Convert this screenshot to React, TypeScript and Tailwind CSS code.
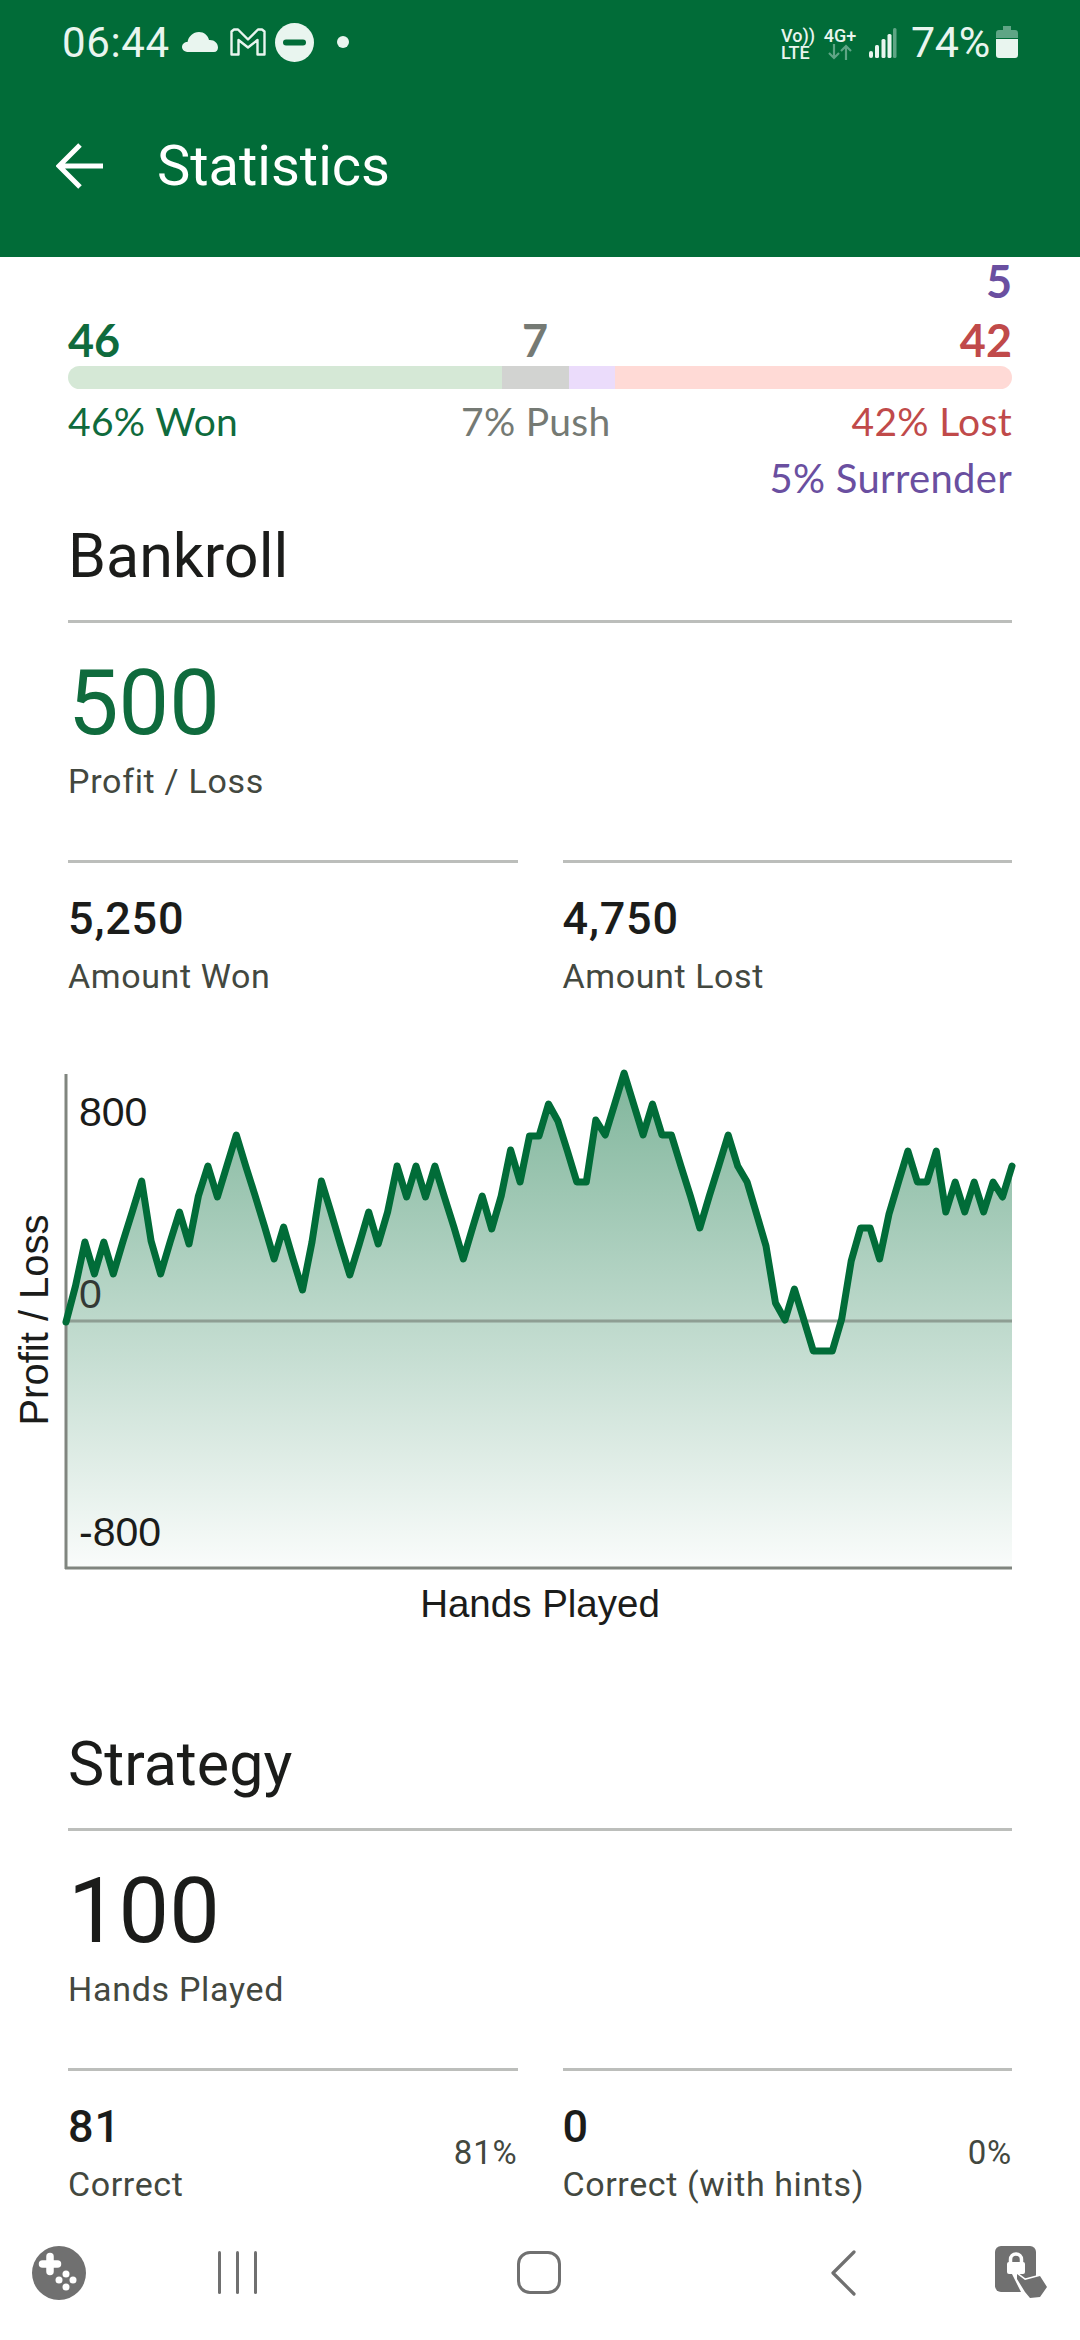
const ys = [
  1323, 1287, 1243, 1275, 1243, 1275, 1243, 1213, 1182, 1242, 1275, 1243, 1213, 1245, 1197, 1167, 1198, 1167, 1136, 1167,
  1197, 1228, 1260, 1228, 1260, 1291, 1243, 1182, 1213, 1245, 1276, 1245, 1213, 1245, 1213, 1167, 1198, 1167, 1198, 1167,
  1198, 1228, 1260, 1228, 1197, 1230, 1197, 1151, 1183, 1137, 1137, 1105, 1122, 1152, 1183, 1183, 1121, 1136, 1105, 1074,
  1105, 1136, 1105, 1136, 1136, 1167, 1197, 1229, 1197, 1167, 1136, 1167, 1183, 1215, 1247, 1304, 1321, 1290, 1321, 1352,
  1352, 1352, 1320, 1262, 1229, 1229, 1260, 1215, 1183, 1152, 1183, 1183, 1152, 1213, 1183, 1213, 1183, 1213, 1183, 1198, 1167,
];
const linePoints = ys.map((y, i) => `${(66 + i * 9.46).toFixed(1)},${y - 1070}`).join(' ');
const areaPoints = `66,500 ${linePoints} 1012,500`;

const font = 'font-["Roboto",sans-serif]';
const lato = 'font-["Lato",sans-serif]';

const StatusBar = () => (
  <div className="flex h-[84px] items-center pl-[62px] text-[#e9f5ef]">
    <span className={`${font} mt-[1px] w-[120px] text-[42px] leading-none tracking-[0.6px]`}>06:44</span>
    <svg width="36" height="20" viewBox="0 0 36 20" className="mt-[-1px]">
      <path d="M7 20C3 20 0 18 0 15c0-3 2.600-5 5.500-5C6.500 4.500 11 0 17 0c5 0 9 3.500 10 8 5-.5 9 3 9 7.500 0 2.500-1.500 4.500-4 4.500Z" fill="#e9f5ef" />
    </svg>
    <svg width="36" height="28" viewBox="0 0 36 28" className="ml-[12px]" fill="none">
      <path d="M1.500 26.500V3.500L4 1.500H8L18 11.500L28 1.500H32L34.500 3.500V26.500H27.500V12L18 19.500L8.500 12V26.500Z" stroke="#e9f5ef" strokeWidth="2.400" strokeLinejoin="round" />
    </svg>
    <svg width="39" height="39" viewBox="0 0 39 39" className="ml-[9px]">
      <circle cx="19.500" cy="19.500" r="19.500" fill="#e9f5ef" />
      <rect x="8" y="16.500" width="23" height="6" rx="3" fill="#016c38" />
    </svg>
    <span className="ml-[23px] h-[12px] w-[12px] rounded-full bg-[#e9f5ef]" />
    <div className={`${font} ml-[432px] mt-[3px] flex w-[32px] flex-col text-[18px] font-medium leading-[17px]`}>
      <span className="whitespace-nowrap">Vo))</span>
      <span className="whitespace-nowrap">LTE</span>
    </div>
    <div className={`${font} ml-[10px] mt-[3px] flex w-[34px] flex-col items-center`}>
      <span className="whitespace-nowrap text-[18px] font-medium leading-[16px]">4G+</span>
      <svg width="24" height="16" viewBox="0 0 24 16" fill="none" stroke="#5fa585" strokeWidth="2.200">
        <path d="M6 0V14M1 9L6 14L11 9M18 16V2M13 7L18 2L23 7" />
      </svg>
    </div>
    <svg width="28" height="30" viewBox="0 0 28 30" className="ml-[12px] mt-[1px]">
      <rect x="0" y="23" width="4" height="7" rx="2" fill="#e9f5ef" />
      <rect x="6" y="17" width="4" height="13" rx="1.500" fill="#e9f5ef" />
      <rect x="12.500" y="11" width="4" height="19" rx="1.500" fill="#e9f5ef" />
      <rect x="18.500" y="6" width="4" height="24" rx="1.500" fill="#e9f5ef" />
      <rect x="24" y="0" width="3.500" height="30" rx="1.500" fill="#5fa585" />
    </svg>
    <span className={`${font} ml-[14px] w-[85px] text-[43px] leading-none tracking-[-0.3px]`}>74%</span>
    <svg width="22" height="32" viewBox="0 0 22 32">
      <path d="M7 0H15V4H19A3 3 0 0 1 22 7V12H0V7A3 3 0 0 1 3 4H7Z" fill="#5fa585" />
      <path d="M0 13H22V29A3 3 0 0 1 19 32H3A3 3 0 0 1 0 29Z" fill="#e9f5ef" />
    </svg>
  </div>
);

const Header = () => (
  <header className="h-[257px] shrink-0 bg-[#016c38]">
    <StatusBar />
    <div className="flex items-center pl-[56px] pt-[49px]">
      <svg width="48" height="46" viewBox="0 0 48 46" fill="none" stroke="#ffffff" strokeWidth="5">
        <path d="M47 23H5M24 2L3 23L24 44" />
      </svg>
      <h1 className={`${font} ml-[53px] text-[56px] leading-[66px] text-white`}>Statistics</h1>
    </div>
  </header>
);

const OutcomeBar = () => (
  <div className={`${lato} text-[#0f6b3d]`}>
    <div className="flex h-[47px] items-end justify-end text-[45px] font-bold leading-none text-[#6a4fa0]">5</div>
    <div className="relative mt-[13px] flex h-[46px] items-center justify-between text-[45px] font-bold leading-none">
      <span className="text-[#0f6b3d]">46</span>
      <span className="absolute left-[454px] text-[#757a74]">7</span>
      <span className="text-[#c04a4a]">42</span>
    </div>
    <div className="mt-[3px] flex h-[23px] overflow-hidden rounded-[12px]">
      <div className="w-[434px] bg-[#d5e8d6]" />
      <div className="w-[67px] bg-[#d2d3d1]" />
      <div className="w-[46px] bg-[#ebdcfb]" />
      <div className="flex-1 bg-[#ffdad6]" />
    </div>
    <div className="relative mt-[13px] flex h-[39px] items-center justify-between text-[39px] leading-none tracking-[0.3px]">
      <span className="text-[#0f6b3d]">46% Won</span>
      <span className="absolute left-[393px] text-[#757a74]">7% Push</span>
      <span className="text-[#c04a4a]">42% Lost</span>
    </div>
    <div className="mt-[17px] flex h-[39px] items-center justify-end text-[40px] leading-none tracking-[0.3px] text-[#6a4fa0]">5% Surrender</div>
  </div>
);

const SectionTitle = ({ title }: { title: string }) => (
  <div className="border-b-[3px] border-[#bcbebb] pb-[28px]">
    <h2 className={`${font} text-[61px] leading-[72px] text-[#1b1c1a]`}>{title}</h2>
  </div>
);

const BigStat = ({ value, label, green }: { value: string; label: string; green?: boolean }) => (
  <div className="pt-[28px]">
    <div className={`${font} text-[90px] leading-[106px] ${green ? 'text-[#0f6b3d]' : 'text-[#1b1c1a]'}`}>{value}</div>
    <div className={`${font} mt-[2px] text-[34px] leading-[44px] tracking-[0.7px] text-[#43483f]`}>{label}</div>
  </div>
);

const SmallStat = ({ value, label, pct }: { value: string; label: string; pct?: string }) => (
  <div className="border-t-[3px] border-[#bcbebb] pt-[28px]">
    <div className="flex items-center justify-between">
      <div>
        <div className={`${font} text-[45px] font-medium leading-[56px] tracking-[0.8px] text-[#1b1c1a]`}>{value}</div>
        <div className={`${font} mt-[3px] text-[34px] leading-[52px] tracking-[0.6px] text-[#43483f]`}>{label}</div>
      </div>
      {pct && <div className={`${font} mb-[4px] text-[33px] tracking-[0.8px] text-[#43483f]`}>{pct}</div>}
    </div>
  </div>
);

const Chart = () => (
  <div className="-mx-[68px] mt-[67px]">
    <svg width="1080" height="510" viewBox="0 0 1080 510" className="block">
      <defs>
        <linearGradient id="profitFill" x1="0" y1="0" x2="0" y2="1">
          <stop offset="0" stopColor="#016c38" stopOpacity="0.5" />
          <stop offset="1" stopColor="#016c38" stopOpacity="0.02" />
        </linearGradient>
      </defs>
      <polygon points={areaPoints} fill="url(#profitFill)" />
      <line x1="66" y1="252" x2="1012" y2="252" stroke="#7f8a80" strokeOpacity="0.75" strokeWidth="3" />
      <line x1="66" y1="5" x2="66" y2="500" stroke="#80857f" strokeWidth="3" />
      <line x1="65" y1="499" x2="1012" y2="499" stroke="#80857f" strokeWidth="3" />
      <polyline points={linePoints} fill="none" stroke="#016c38" strokeWidth="7" strokeLinejoin="round" strokeLinecap="round" />
      <g fontFamily="'Liberation Sans', sans-serif" fontSize="41" fill="#1b1c1a">
        <text x="79" y="57">800</text>
        <text x="79" y="239" fillOpacity="0.85">0</text>
        <text x="79" y="477">-800</text>
        <text transform="translate(48 251) rotate(-90)" textAnchor="middle" fontSize="40">Profit / Loss</text>
      </g>
    </svg>
    <div className='mt-[3px] text-center font-["Liberation_Sans",sans-serif] text-[38.500px] leading-[44px] text-[#1b1c1a]'>Hands Played</div>
  </div>
);

const GameIcon = () => (
  <svg width="54" height="54" viewBox="0 0 54 54">
    <circle cx="27" cy="27" r="27" fill="#707070" />
    <path d="M10.500 18H25.500M18 10.500V25.500" stroke="#fff" strokeWidth="7.500" strokeLinecap="round" />
    <circle cx="34" cy="28" r="3.500" fill="#fff" />
    <circle cx="27" cy="34" r="3.500" fill="#fff" />
    <circle cx="41" cy="34" r="3.500" fill="#fff" />
    <circle cx="34" cy="41" r="3.500" fill="#fff" />
  </svg>
);

const LockIcon = () => (
  <svg width="53" height="54" viewBox="0 0 53 54">
    <rect x="0" y="0" width="41" height="46" rx="6" fill="#707070" />
    <path d="M15.500 18V13.500a5.500 5.500 0 0 1 11 0V18" fill="none" stroke="#fff" strokeWidth="3.500" />
    <rect x="12" y="16" width="18" height="12" rx="2" fill="#fff" />
    <path d="M12 26L16 26L27 48L33 48L22 26Z" fill="#fff" />
    <path d="M22 28L30 34L45 30L52 41L45 51L35 52L30 46L22 33Z" fill="#707070" stroke="#fff" strokeWidth="3" strokeLinejoin="round" paintOrder="stroke" />
  </svg>
);

const NavBar = () => (
  <nav className="flex h-[135px] shrink-0 items-center bg-white">
    <div className="ml-[32px]">
      <GameIcon />
    </div>
    <div className="ml-[132px] flex h-[43px] w-[39px] justify-between">
      <span className="w-[3px] rounded-[2px] bg-[#707070]" />
      <span className="w-[3px] rounded-[2px] bg-[#707070]" />
      <span className="w-[3px] rounded-[2px] bg-[#707070]" />
    </div>
    <div className="ml-[260px] h-[43px] w-[44px] rounded-[13px] border-[3px] border-[#707070]" />
    <svg width="26" height="46" viewBox="0 0 26 46" className="ml-[269px]" fill="none" stroke="#707070" strokeWidth="3.200" strokeLinecap="round" strokeLinejoin="round">
      <path d="M24 2L3 23L24 44" />
    </svg>
    <div className="ml-[139px]">
      <LockIcon />
    </div>
  </nav>
);

export default function App() {
  return (
    <div className="flex h-[2340px] w-[1080px] flex-col overflow-hidden bg-white">
      <Header />
      <main className="min-h-0 flex-1 overflow-hidden px-[68px]">
        <OutcomeBar />
        <div className="mt-[23px]">
          <SectionTitle title="Bankroll" />
          <BigStat value="500" label="Profit / Loss" green />
          <div className="mt-[57px] grid grid-cols-2 gap-x-[45px]">
            <SmallStat value="5,250" label="Amount Won" />
            <SmallStat value="4,750" label="Amount Lost" />
          </div>
          <Chart />
        </div>
        <div className="mt-[102px]">
          <SectionTitle title="Strategy" />
          <BigStat value="100" label="Hands Played" />
          <div className="mt-[57px] grid grid-cols-2 gap-x-[45px]">
            <SmallStat value="81" label="Correct" pct="81%" />
            <SmallStat value="0" label="Correct (with hints)" pct="0%" />
          </div>
        </div>
      </main>
      <NavBar />
    </div>
  );
}
